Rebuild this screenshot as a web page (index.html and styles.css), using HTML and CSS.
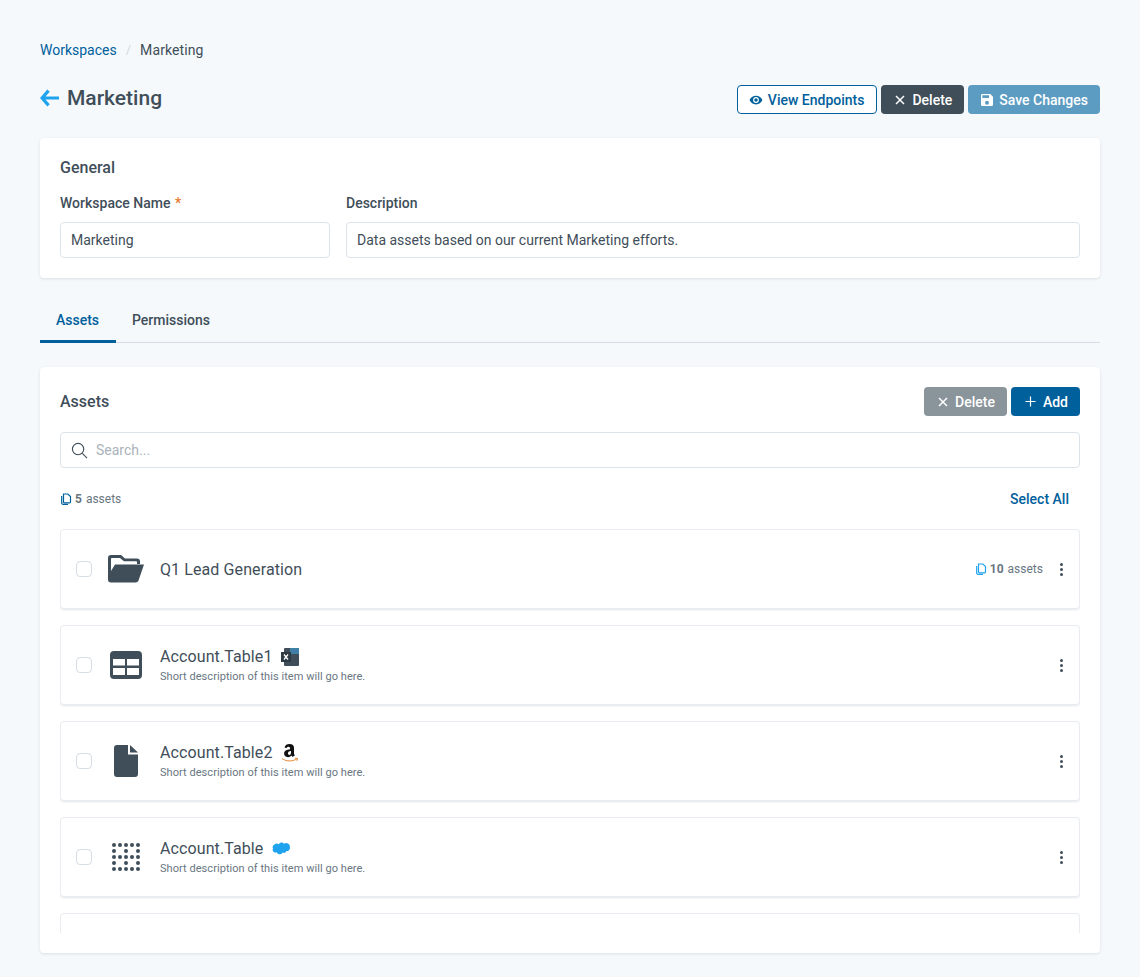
FILE: index.html
```html
<!DOCTYPE html>
<html lang="en">
<head>
  <meta charset="UTF-8" />
  <title>Marketing Workspace</title>
  <link rel="stylesheet" href="styles.css">
</head>
<body>
  <nav class="crumbs">
    <a class="crumb-link">Workspaces</a>
    <span class="crumb-sep">/</span>
    <span class="crumb-current">Marketing</span>
  </nav>

  <header class="page-head">
    <div class="page-title">
      <svg class="back" viewBox="0 0 20 18"><path d="M9 1.200 2.200 9 9 16.800M2.500 9H20" fill="none" stroke="#1fa3ee" stroke-width="3.400"/></svg>
      <h1>Marketing</h1>
    </div>
    <div class="btn-row">
      <button class="btn btn-outline">
        <svg viewBox="0 0 24 24"><path d="M12 4.500C7 4.500 2.700 7.600 1 12c1.700 4.400 6 7.500 11 7.500s9.300-3.100 11-7.500c-1.700-4.400-6-7.500-11-7.500zM12 17a5 5 0 1 1 0-10 5 5 0 0 1 0 10zm0-8a3 3 0 1 0 0 6 3 3 0 0 0 0-6z" fill="#00609c"/></svg>
        View Endpoints
      </button>
      <button class="btn btn-dark btn-x">
        <svg viewBox="0 0 12 12"><path d="M2 2l8 8M10 2l-8 8" stroke="#fff" stroke-width="1.500"/></svg>
        Delete
      </button>
      <button class="btn btn-save">
        <svg viewBox="0 0 24 24"><path d="M17 3H5a2 2 0 0 0-2 2v14a2 2 0 0 0 2 2h14a2 2 0 0 0 2-2V7l-4-4zm-5 16a3 3 0 1 1 0-6 3 3 0 0 1 0 6zm3-10H5V5h10v4z" fill="#fff"/></svg>
        Save Changes
      </button>
    </div>
  </header>

  <section class="card general">
    <h2>General</h2>
    <div class="fields">
      <div class="field field-name">
        <label>Workspace Name <span class="req">*</span></label>
        <div class="input">Marketing</div>
      </div>
      <div class="field field-desc">
        <label>Description</label>
        <div class="input">Data assets based on our current Marketing efforts.</div>
      </div>
    </div>
  </section>

  <div class="tabs">
    <div class="tab active">Assets</div>
    <div class="tab">Permissions</div>
  </div>

  <section class="card assets">
    <div class="assets-head">
      <h2>Assets</h2>
      <div class="btn-row">
        <button class="btn btn-grey btn-x">
          <svg viewBox="0 0 12 12"><path d="M2 2l8 8M10 2l-8 8" stroke="#fff" stroke-width="1.500"/></svg>
          Delete
        </button>
        <button class="btn btn-primary">
          <svg viewBox="0 0 12 12"><path d="M6 .5v11M.5 6h11" stroke="#fff" stroke-width="1.300"/></svg>
          Add
        </button>
      </div>
    </div>

    <div class="search">
      <svg viewBox="0 0 18 18"><circle cx="7.500" cy="7.500" r="6" fill="none" stroke="#3f4e59" stroke-width="1.200"/><path d="M12 12l5 5" stroke="#3f4e59" stroke-width="1.200"/></svg>
      <span>Search...</span>
    </div>

    <div class="count-row">
      <div class="count">
        <svg class="copies" viewBox="0 0 12 12"><path d="M3.500 1h4.300L10.500 3.500V9a.8.8 0 0 1-.8.800H4.300a.8.8 0 0 1-.8-.8z" fill="none" stroke="#00609c" stroke-width="1.200"/><path d="M1.700 3v7a1.300 1.300 0 0 0 1.300 1.300h5" fill="none" stroke="#00609c" stroke-width="1.200"/></svg>
        <b>5</b> assets
      </div>
      <a class="select-all">Select All</a>
    </div>

    <div class="list">
      <div class="item">
        <div class="check"></div>
        <div class="type-icon">
          <svg width="36" height="28" viewBox="0 0 36 28"><path d="M3 0h10l4 3.500h12a3 3 0 0 1 3 3V9h-3V7a.8.8 0 0 0-.8-.8H16L12 3H3.800a.8.8 0 0 0-.8.8V16L7 9.500h29l-5.500 16a3 3 0 0 1-2.800 2H3a3 3 0 0 1-3-3V3a3 3 0 0 1 3-3z" fill="#3f4e59"/></svg>
        </div>
        <div class="item-text"><div class="item-name">Q1 Lead Generation</div></div>
        <div class="item-meta">
          <svg class="copies" viewBox="0 0 12 12"><path d="M3.500 1h4.300L10.500 3.500V9a.8.8 0 0 1-.8.800H4.300a.8.8 0 0 1-.8-.8z" fill="none" stroke="#1fa3ee" stroke-width="1.200"/><path d="M1.700 3v7a1.300 1.300 0 0 0 1.300 1.300h5" fill="none" stroke="#1fa3ee" stroke-width="1.200"/></svg>
          <b>10</b> assets
        </div>
        <div class="kebab"><i></i><i></i><i></i></div>
      </div>

      <div class="item">
        <div class="check"></div>
        <div class="type-icon">
          <svg width="32" height="28" viewBox="0 0 32 28"><path fill-rule="evenodd" d="M4 0h24a4 4 0 0 1 4 4v20a4 4 0 0 1-4 4H4a4 4 0 0 1-4-4V4a4 4 0 0 1 4-4zM3 8v6.500h12V8zm14 0v6.500h12V8zM3 17v7h12v-7zm14 0v7h12v-7z" fill="#3f4e59"/></svg>
        </div>
        <div class="item-text">
          <div class="item-name">Account.Table1
            <svg class="brand" width="18" height="18" viewBox="0 0 18 18"><rect x="3" y="0" width="15" height="18" rx="1" fill="#3f4e59"/><rect x="9" y="0" width="9" height="6" fill="#3f7fa6"/><rect x="0" y="4" width="10" height="10" fill="#2c3a44"/><path d="M3 6.500l4 5M7 6.500l-4 5" stroke="#fff" stroke-width="1.300"/></svg>
          </div>
          <div class="item-desc">Short description of this item will go here.</div>
        </div>
        <div class="kebab"><i></i><i></i><i></i></div>
      </div>

      <div class="item">
        <div class="check"></div>
        <div class="type-icon">
          <svg width="24" height="32" viewBox="0 0 24 32"><path d="M3 0h11v9.500h10V29a3 3 0 0 1-3 3H3a3 3 0 0 1-3-3V3a3 3 0 0 1 3-3zM16 0l8 7.500h-8z" fill="#3f4e59"/></svg>
        </div>
        <div class="item-text">
          <div class="item-name">Account.Table2
            <svg class="brand" width="18" height="20" viewBox="0 0 18 20"><path d="M3.500 4.500C4 2 6 1 8.500 1c3 0 4.500 1.300 4.500 4v5c0 1 .3 1.500.9 2.200l-2.200 1.800c-.6-.5-.9-1-1.200-1.500-1 1.200-2.100 1.700-3.500 1.700-2.300 0-3.900-1.400-3.900-3.600 0-2.900 2.500-4 6-4.300V5.500c0-1-.5-1.800-1.600-1.800-1 0-1.600.6-1.800 1.400zm6.500 3.600c-1.800.1-3 .7-3 2.200 0 1 .5 1.600 1.300 1.600 1.200 0 1.700-1.200 1.700-2.500z" fill="#111"/><path d="M1 15.500c4 3.200 11 3.200 15 .2M14 15.300l2.500.2-.5 2.300" fill="none" stroke="#e8862e" stroke-width="1"/></svg>
          </div>
          <div class="item-desc">Short description of this item will go here.</div>
        </div>
        <div class="kebab"><i></i><i></i><i></i></div>
      </div>

      <div class="item">
        <div class="check"></div>
        <div class="type-icon">
          <svg width="28" height="28" viewBox="0 0 28 28" fill="#3f4e59">
            <circle cx="2" cy="2" r="2"/><circle cx="8" cy="2" r="2"/><circle cx="14" cy="2" r="2"/><circle cx="20" cy="2" r="2"/><circle cx="26" cy="2" r="2"/>
            <circle cx="2" cy="8" r="2"/><circle cx="14" cy="8" r="2"/><circle cx="26" cy="8" r="2"/>
            <circle cx="2" cy="14" r="2"/><circle cx="8" cy="14" r="2"/><circle cx="14" cy="14" r="2"/><circle cx="20" cy="14" r="2"/><circle cx="26" cy="14" r="2"/>
            <circle cx="2" cy="20" r="2"/><circle cx="14" cy="20" r="2"/><circle cx="26" cy="20" r="2"/>
            <circle cx="2" cy="26" r="2"/><circle cx="8" cy="26" r="2"/><circle cx="14" cy="26" r="2"/><circle cx="20" cy="26" r="2"/><circle cx="26" cy="26" r="2"/>
          </svg>
        </div>
        <div class="item-text">
          <div class="item-name">Account.Table
            <svg class="brand" width="19" height="14" viewBox="0 0 19 14"><path d="M7.800 2.200A3.200 3.200 0 0 1 13 1.700a3.800 3.800 0 0 1 5.900 3.300 3.500 3.500 0 0 1-3.600 4.300 2.800 2.800 0 0 1-3.700 1.200 3.200 3.200 0 0 1-5.900-.2A2.800 2.800 0 0 1 2 6.500a3 3 0 0 1 1.500-4 3.300 3.300 0 0 1 4.300-.3z" fill="#1fa3ee"/></svg>
          </div>
          <div class="item-desc">Short description of this item will go here.</div>
        </div>
        <div class="kebab"><i></i><i></i><i></i></div>
      </div>

      <div class="item"></div>
    </div>
  </section>
</body>
</html>
```

FILE: styles.css
```css
:root {
  --ink: #3f4e59;
  --blue: #00609c;
  --sky: #1fa3ee;
  --line: #dde3ea;
  --muted: #69767f;
}

* { box-sizing: border-box; }

html, body {
  margin: 0;
  height: 100%;
}

body {
  background: #f5f9fc;
  color: var(--ink);
  font-family: Roboto, "Liberation Sans", sans-serif;
  font-size: 14px;
  padding: 42px 40px 24px;
  overflow: hidden;
}

h1, h2 { margin: 0; font-weight: 500; }

/* Breadcrumbs */
.crumbs {
  display: flex;
  align-items: center;
  gap: 9px;
  height: 16px;
  line-height: 16px;
}
.crumb-link { color: var(--blue); }
.crumb-sep { color: #d3d9df; font-size: 13px; }
.crumb-current { letter-spacing: 0.1px; }

/* Page header */
.page-head {
  display: flex;
  align-items: center;
  justify-content: space-between;
  margin-top: 27px;
  height: 29px;
}
.page-title {
  display: flex;
  align-items: center;
  gap: 8px;
}
.back { width: 19px; height: 18px; margin-top: -3px; }
.page-title h1 {
  font-size: 21px;
  line-height: 28px;
  padding-bottom: 4px;
}

.btn-row { display: flex; gap: 4px; }

.btn {
  display: flex;
  align-items: center;
  justify-content: center;
  gap: 5px;
  height: 29px;
  padding: 0 11px;
  border: 1px solid transparent;
  border-radius: 4px;
  font: 500 14px Roboto, "Liberation Sans", sans-serif;
}
.btn svg { width: 14px; height: 14px; flex: none; }
.btn-x svg { width: 12px; height: 12px; }
.btn-x { padding-left: 12px; gap: 6px; }
.btn-outline { background: #fff; border-color: var(--blue); color: var(--blue); padding-right: 12px; }
.btn-dark { background: var(--ink); color: #fff; }
.btn-save { background: #5c9cc2; color: #fff; gap: 4px; padding-left: 10px; }
.btn-save svg { width: 16px; height: 16px; }
.btn-grey { background: #8a949b; color: #fff; }
.btn-primary { background: var(--blue); color: #fff; gap: 7px; padding: 0 11px 0 13px; }
.btn-primary svg { width: 11px; height: 11px; }

/* Cards */
.card {
  background: #fff;
  border-radius: 4px;
  box-shadow: 0 1px 3px rgba(63, 78, 89, 0.14);
}
.card h2 { font-size: 16px; line-height: 20px; }

.general {
  margin-top: 24px;
  height: 140px;
  padding: 20px;
}

.fields {
  display: flex;
  gap: 16px;
  margin-top: 17px;
}
.field-name { width: 270px; flex: none; }
.field-desc { flex: 1; }
.field label {
  display: block;
  font-weight: 500;
  line-height: 16px;
  margin-bottom: 11px;
}
.req { color: #e8762e; margin-left: 1px; }

.input {
  height: 36px;
  line-height: 34px;
  padding: 0 10px;
  border: 1px solid var(--line);
  border-radius: 4px;
  background: #fff;
}

/* Tabs */
.tabs {
  display: flex;
  height: 45px;
  margin-top: 20px;
  border-bottom: 1px solid #d6dde4;
}
.tab {
  padding: 0 16px;
  line-height: 44px;
  font-weight: 500;
}
.tab.active {
  color: var(--blue);
  width: 76px;
  height: 45px;
  border-bottom: 3px solid var(--blue);
}

/* Assets panel */
.assets {
  margin-top: 24px;
  height: 586px;
  padding: 20px 20px 20px;
}
.assets-head {
  display: flex;
  align-items: center;
  justify-content: space-between;
}
.search {
  display: flex;
  align-items: center;
  gap: 8px;
  height: 36px;
  margin-top: 16px;
  padding: 0 10px;
  border: 1px solid var(--line);
  border-radius: 4px;
  color: #aab3ba;
}
.search svg { width: 17px; height: 17px; }

.count-row {
  display: flex;
  align-items: center;
  justify-content: space-between;
  height: 61px;
  padding-right: 11px;
}
.count, .item-meta {
  display: flex;
  align-items: center;
  gap: 3px;
  font-size: 12px;
  color: var(--muted);
}
.count b, .item-meta b { font-weight: 700; margin-right: 1px; }
.copies { width: 12px; height: 12px; }
.select-all { color: var(--blue); font-weight: 500; }

.list {
  display: flex;
  flex-direction: column;
  gap: 16px;
  height: 404px;
  overflow: hidden;
  padding: 0 0 1px;
}
.item {
  display: flex;
  align-items: center;
  flex: none;
  height: 80px;
  padding: 0 15px;
  border: 1px solid #e9edf1;
  border-radius: 4px;
  background: #fff;
  box-shadow: 0 1px 2px rgba(63, 78, 89, 0.14);
}
.check {
  width: 16px;
  height: 16px;
  flex: none;
  border: 1px solid #d6dde4;
  border-radius: 4px;
}
.type-icon {
  width: 36px;
  height: 36px;
  flex: none;
  margin: 0 16px;
  display: flex;
  align-items: center;
  justify-content: center;
}
.item-text { flex: 1; min-width: 0; padding-top: 1px; }
.item-name {
  display: flex;
  align-items: center;
  gap: 8px;
  font-size: 16px;
  line-height: 20px;
  letter-spacing: 0.1px;
}
.item-desc {
  margin-top: 3px;
  font-size: 11px;
  line-height: 14px;
  letter-spacing: 0.05px;
  color: var(--muted);
}
.item-meta { margin-right: 16px; }

.kebab {
  display: flex;
  flex-direction: column;
  align-items: center;
  gap: 2px;
  width: 5px;
}
.kebab i {
  width: 3px;
  height: 3px;
  border-radius: 50%;
  background: var(--ink);
}
```
